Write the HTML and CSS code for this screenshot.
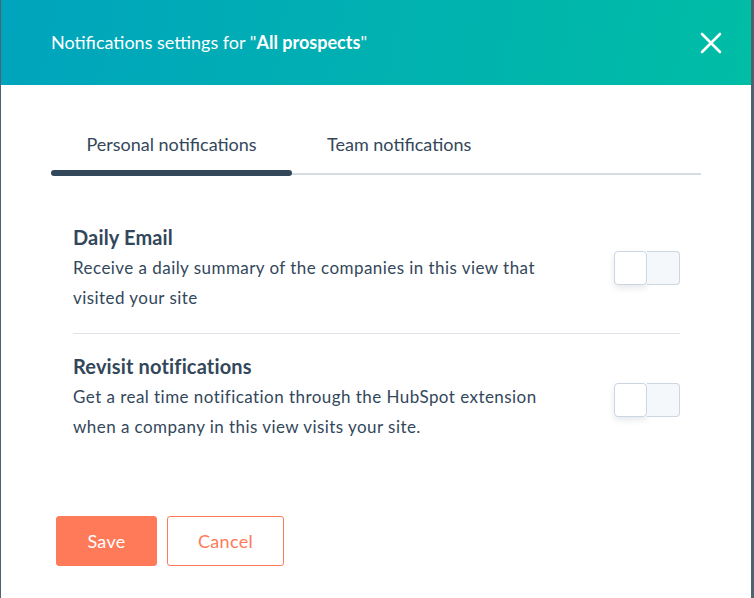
FILE: index.html
```html
<!DOCTYPE html>
<html>
<head>
<meta charset="utf-8">
<link rel="stylesheet" href="styles.css">
</head>
<body>
<div class="modal">
  <header class="modal-header">
    <h1 class="modal-title">Notifications settings for "<strong>All prospects</strong>"</h1>
    <button class="close" aria-label="Close">
      <svg width="22" height="22" viewBox="0 0 22 22"><path d="M2 2 L20 20 M20 2 L2 20" stroke="#fff" stroke-width="2.6" stroke-linecap="round"/></svg>
    </button>
  </header>
  <div class="modal-body">
    <nav class="tabs">
      <div class="tab active">Personal notifications</div>
      <div class="tab">Team notifications</div>
    </nav>
    <div class="settings">
      <div class="setting">
        <div class="setting-text">
          <div class="setting-title">Daily Email</div>
          <div class="setting-desc">Receive a daily summary of the companies in this view that visited your site</div>
        </div>
        <div class="toggle"><span class="knob"></span><span class="track"></span></div>
      </div>
      <div class="setting">
        <div class="setting-text">
          <div class="setting-title">Revisit notifications</div>
          <div class="setting-desc">Get a real time notification through the HubSpot extension when a company in this view visits your site.</div>
        </div>
        <div class="toggle"><span class="knob"></span><span class="track"></span></div>
      </div>
    </div>
    <div class="actions">
      <button class="btn btn-primary">Save</button>
      <button class="btn btn-secondary">Cancel</button>
    </div>
  </div>
</div>
</body>
</html>
```
FILE: styles.css
```css
html, body {
  margin: 0;
  padding: 0;
  height: 100%;
}
body {
  background: #516170;
  font-family: Lato, "Open Sans", sans-serif;
  color: #33475b;
}
.modal {
  margin: 0 3px 0 1px;
  background: #fff;
  height: 598px;
  overflow: hidden;
}
.modal-header {
  height: 85px;
  margin-left: -1px;
  background: linear-gradient(100deg, #00a4bd 0%, #00bda5 100%);
  display: flex;
  align-items: center;
  justify-content: space-between;
  padding: 0 29px 0 51px;
  box-sizing: border-box;
}
.modal-title {
  margin: 0;
  font-size: 18px;
  font-weight: 400;
  color: #fff;
  letter-spacing: 0;
  padding-bottom: 1px;
}
.modal-title strong {
  font-weight: 700;
}
.close {
  background: none;
  border: 0;
  padding: 0;
  width: 22px;
  height: 22px;
  display: flex;
  margin-top: 1px;
}
.modal-body {
  padding: 0 50px 0 50px;
}
.tabs {
  display: flex;
  margin-top: 43px;
  border-bottom: 2px solid #d5dbe3;
  height: 47px;
  box-sizing: border-box;
}
.tab {
  font-size: 18px;
  color: #33475b;
  padding: 0 35px;
  line-height: 33px;
  height: 45px;
  box-sizing: border-box;
  position: relative;
}
.tab.active {
  width: 241px;
  text-align: center;
  padding: 0;
}
.tab.active::after {
  content: "";
  position: absolute;
  left: 0;
  right: 0;
  bottom: -3px;
  height: 6px;
  border-radius: 3px;
  background: #33475b;
}
.settings {
  margin: 46px 21px 0 22px;
}
.setting {
  display: flex;
  align-items: center;
  justify-content: space-between;
  padding-bottom: 20px;
}
.setting + .setting {
  border-top: 1px solid #dfe3eb;
  padding-top: 16px;
}
.setting + .setting .toggle {
  margin-top: 8px;
}
.setting-text {
  width: 480px;
}
.setting-title {
  font-size: 20px;
  font-weight: 700;
  line-height: 32px;
  letter-spacing: 0.15px;
  color: #33475b;
}
.setting-desc {
  font-size: 17px;
  line-height: 30px;
  letter-spacing: 0.45px;
  color: #33475b;
}
.toggle {
  display: flex;
  width: 66px;
  height: 34px;
  margin-top: 2px;
  position: relative;
}
.toggle .track {
  flex: 1;
  box-sizing: border-box;
  height: 34px;
  background: #f5f8fa;
  border: 1px solid #cbd6e2;
  border-left: 0;
  border-radius: 0 4px 4px 0;
}
.toggle .knob {
  width: 33px;
  height: 34px;
  box-sizing: border-box;
  background: #fff;
  border: 1px solid #cbd6e2;
  border-radius: 4px;
  box-shadow: 0 3px 6px rgba(45, 62, 80, 0.12);
}
.actions {
  display: flex;
  gap: 10px;
  margin-top: 54px;
  padding-left: 5px;
}
.btn {
  font-family: Lato, "Open Sans", sans-serif;
  font-size: 18px;
  letter-spacing: 0.3px;
  height: 50px;
  border-radius: 3px;
  box-sizing: border-box;
  cursor: pointer;
}
.btn-primary {
  width: 101px;
  background: #ff7a59;
  border: 1px solid #ff7a59;
  color: #fff;
}
.btn-secondary {
  width: 117px;
  background: #fff;
  border: 1px solid #ff7a59;
  color: #ff7a59;
}
```
